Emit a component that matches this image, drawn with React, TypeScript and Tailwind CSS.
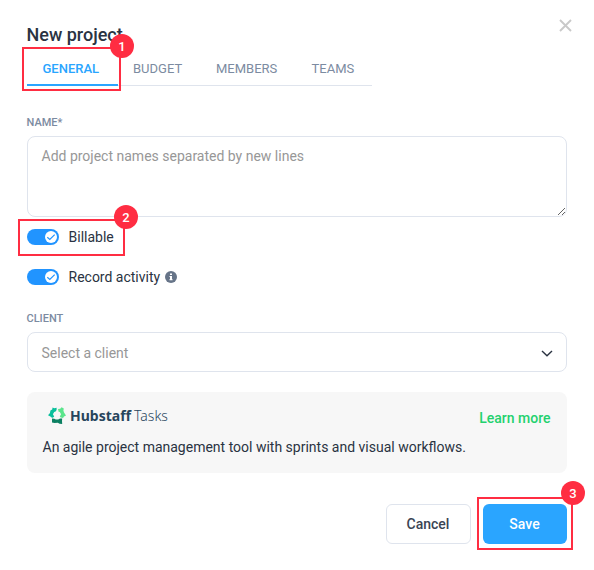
import React, { useState } from 'react';

const tabs = [
    { label: 'General', width: 'w-[90.5px]' },
    { label: 'Budget', width: 'w-[83px]' },
    { label: 'Members', width: 'w-[95.5px]' },
    { label: 'Teams', width: 'w-[76px]' },
];

const Marker = ({ step, className, badge }: { step: number; className: string; badge: string }) => (
    <div className={`absolute pointer-events-none border-2 border-[#ff2d42] ${className}`}>
        <span className={`absolute flex h-6 w-6 items-center justify-center rounded-full bg-[#ff2d42] text-[13px] font-medium leading-none text-white ${badge}`}>
            {step}
        </span>
    </div>
);

const Toggle = ({ checked, onChange }: { checked: boolean; onChange: () => void }) => (
    <button
        type="button"
        role="switch"
        aria-checked={checked}
        onClick={onChange}
        className={`flex h-4 w-8 items-center rounded-full px-[2px] ${checked ? 'justify-end bg-[#2194ff]' : 'justify-start bg-slate-300'}`}
    >
        <svg viewBox="0 0 12 12" className="h-3 w-3">
            <circle cx="6" cy="6" r="6" fill="#fff" />
            <path d="M2.3 6.3 4.8 8.5 9.7 3.6" fill="none" stroke="#2194ff" strokeWidth="1.2" />
        </svg>
    </button>
);

const Logo = () => (
    <svg viewBox="0 0 18 17" className="h-[17px] w-[18px]">
        <path d="M4.6 .6 6.2 1.2 8.6 .8 8.6 3 7.6 4.6 6.2 5 4.9 7.2 6.2 9.6 4.8 10.8 3.6 10.6 2.4 9.4 0 8.2 2 6 2.4 3.4 4.2 2.6Z" fill="#0abf9c" />
        <path d="M10 2 12.2 1.8 13.6 .2 15.8 1.4 15.4 3.4 16 5.6 18 8.4 16 9.4 15 11 12.8 10.4 11.8 9.4 13.1 7.2 11.8 5 10.6 4.8Z" fill="#5be58c" />
        <path d="M4 11.4 6.3 11.8 7.8 12.4 10.2 12.4 12 11.4 14.2 11.6 14 14 14.2 17 11.6 16.8 9.8 15.8 6.5 16 4 15.4Z" fill="#0c8062" />
    </svg>
);

const App = () => {
    const [active, setActive] = useState('General');
    const [billable, setBillable] = useState(true);
    const [record, setRecord] = useState(true);

    return (
        <div className="relative h-[570px] w-[594px] overflow-hidden bg-white px-[27px] pt-[22px] font-['Roboto',sans-serif] text-[#2a3342]">
            <button type="button" aria-label="Close" className="absolute right-[22px] top-[19px]">
                <svg viewBox="0 0 13 13" className="h-[13px] w-[13px]">
                    <path d="M1 1 12 12M12 1 1 12" stroke="#c9c9c9" strokeWidth="1.9" />
                </svg>
            </button>

            <h1 className="-ml-[0.5px] h-[26px] text-[18px] font-medium leading-[26px]">New project</h1>

            {/* Tabs */}
            <div className="relative flex h-[38px] w-[345px] border-b border-[#dfe4ed]">
                {tabs.map((tab) => (
                    <button
                        key={tab.label}
                        type="button"
                        onClick={() => setActive(tab.label)}
                        className={`-mb-px flex h-[38px] items-center pl-[15.5px] text-[13px] uppercase ${tab.width} ${active === tab.label ? 'border-b-2 border-[#2aa5ff] pt-[6px] font-medium text-[#2aa5ff]' : 'pt-[4px] text-[#7c8ba1]'}`}
                    >
                        {tab.label}
                    </button>
                ))}
                <Marker step={1} className="-left-[5px] -top-px h-[44px] w-[99px]" badge="-top-[15px] -right-[15px]" />
            </div>

            <label className="-ml-[0.5px] mt-[29px] block h-[21px] text-[11px] font-medium leading-[15px] text-[#7c8ba1]">NAME*</label>
            <textarea
                className="block h-[81px] w-full resize rounded-lg border border-[#dfe4ed] px-[13.5px] py-[9px] text-[14px] leading-[20px] outline-none placeholder:text-[#979797]"
                placeholder="Add project names separated by new lines"
            />

            <div className="relative mt-[10px] flex h-5 items-center gap-[9.5px] text-[14px]">
                <Toggle checked={billable} onChange={() => setBillable(!billable)} />
                <span>Billable</span>
                <Marker step={2} className="-left-[9px] -top-[8px] h-[37px] w-[107px]" badge="-top-[16px] -right-[15px]" />
            </div>

            <div className="mt-5 flex h-5 items-center text-[14px]">
                <Toggle checked={record} onChange={() => setRecord(!record)} />
                <span className="ml-[9.5px]">Record activity</span>
                <svg viewBox="0 0 12 12" className="ml-[4.5px] h-3 w-3">
                    <circle cx="6" cy="6" r="6" fill="#667488" />
                    <path d="M5 2.4H7V4H5ZM4.5 5H7V8.3H7.6V9.3H4.4V8.3H5V6H4.5Z" fill="#fff" />
                </svg>
            </div>

            <label className="-ml-[0.5px] mt-[24px] block h-[21px] text-[11px] font-medium leading-[15px] text-[#7c8ba1]">CLIENT</label>
            <button
                type="button"
                className="flex h-10 w-full items-center justify-between rounded-lg border border-[#dfe4ed] pl-[13.5px] pr-[13px] text-[14px] text-[#979797]"
            >
                <span className="pt-[2px]">Select a client</span>
                <svg viewBox="0 0 12 7" className="mt-0.5 h-[7px] w-3">
                    <path d="M1 1 6 5.8 11 1" fill="none" stroke="#2a3342" strokeWidth="1.4" />
                </svg>
            </button>

            {/* Hubstaff Tasks banner */}
            <div className="mt-5 h-[81px] rounded-lg bg-[#f7f7f7] pl-[15.5px] pr-[16.5px] pt-[14px]">
                <div className="flex h-[22px] items-start justify-between">
                    <div className="flex items-center pl-[5.5px] font-['Noto_Sans',sans-serif] text-[14px] leading-[19px] text-[#27455c]">
                        <Logo />
                        <span className="ml-1 w-[64px] whitespace-nowrap font-bold">Hubstaff</span>
                        <span className="font-light">Tasks</span>
                    </div>
                    <a href="#" className="pt-[2px] text-[14px] font-medium leading-[20px] text-[#23d16e]">Learn more</a>
                </div>
                <p className="mt-[9px] text-[14px] leading-[20px]">An agile project management tool with sprints and visual workflows.</p>
            </div>

            <div className="mt-[31px] flex justify-end gap-3 text-[14px] font-medium">
                <button type="button" className="h-10 w-[85px] rounded-md border border-[#dfe4ed] pr-px text-[#3a4454]">Cancel</button>
                <div className="relative">
                    <button type="button" className="h-10 w-[84px] rounded-md bg-[#2aa5ff] pr-px text-white">Save</button>
                    <Marker step={3} className="-left-[6px] -top-[7px] h-[53px] w-[96px]" badge="-top-[18px] -right-[14px]" />
                </div>
            </div>
        </div>
    );
};

export default App;
